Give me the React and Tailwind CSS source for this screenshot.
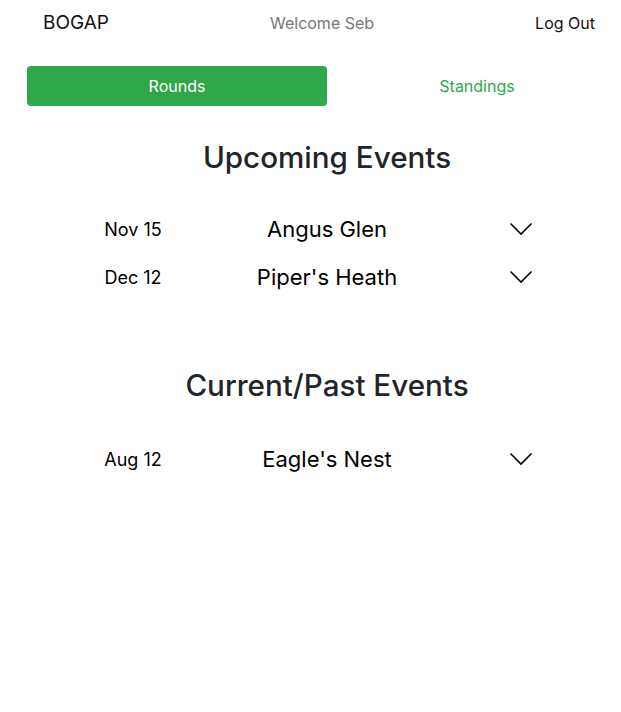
import React from "react";

const upcoming = [
  { date: "Nov 15", name: "Angus Glen" },
  { date: "Dec 12", name: "Piper's Heath" },
];

const past = [{ date: "Aug 12", name: "Eagle's Nest" }];

const Chevron = () => (
  <svg width="24" height="14" viewBox="0 0 24 14" fill="none">
    <path d="M1.5 1.5 L12 12 L22.5 1.5" stroke="#000" strokeWidth="1.6" />
  </svg>
);

const EventRow = ({ date, name }) => (
  <div className="grid grid-cols-3 items-center w-[582px] ml-[36px] h-[48px]">
    <span className="text-center text-[18px] text-black">{date}</span>
    <span className="text-center text-[22px] text-black">{name}</span>
    <span className="flex justify-center">
      <Chevron />
    </span>
  </div>
);

const App = () => {
  return (
    <div
      className="w-[621px] min-h-[712px] bg-white overflow-hidden"
      style={{ fontFamily: "Inter, 'Noto Sans', sans-serif" }}
    >
      <div className="flex items-center justify-between h-[46px] pl-[43px] pr-[26px]">
        <span className="text-[19px] text-[#111]">BOGAP</span>
        <span className="text-[16px] text-[#777]">Welcome Seb</span>
        <span className="text-[16px] text-[#111]">Log Out</span>
      </div>

      <div className="flex w-[600px] ml-[27px] mt-[20px]">
        <button className="w-[300px] h-[40px] rounded bg-[#2ea84a] text-white text-[16px]">
          Rounds
        </button>
        <button className="w-[300px] h-[40px] text-[#2ea84a] text-[16px]">
          Standings
        </button>
      </div>

      <h2 className="w-[600px] ml-[27px] text-center text-[29.6px] font-medium text-[#212529] mt-[31px] leading-[40px]">
        Upcoming Events
      </h2>
      <div className="mt-[28px]">
        {upcoming.map((e) => (
          <EventRow key={e.name} {...e} />
        ))}
      </div>

      <h2 className="w-[600px] ml-[27px] text-center text-[29.6px] font-medium text-[#212529] mt-[64px] leading-[40px]">
        Current/Past Events
      </h2>
      <div className="mt-[30px]">
        {past.map((e) => (
          <EventRow key={e.name} {...e} />
        ))}
      </div>
    </div>
  );
};

export default App;
